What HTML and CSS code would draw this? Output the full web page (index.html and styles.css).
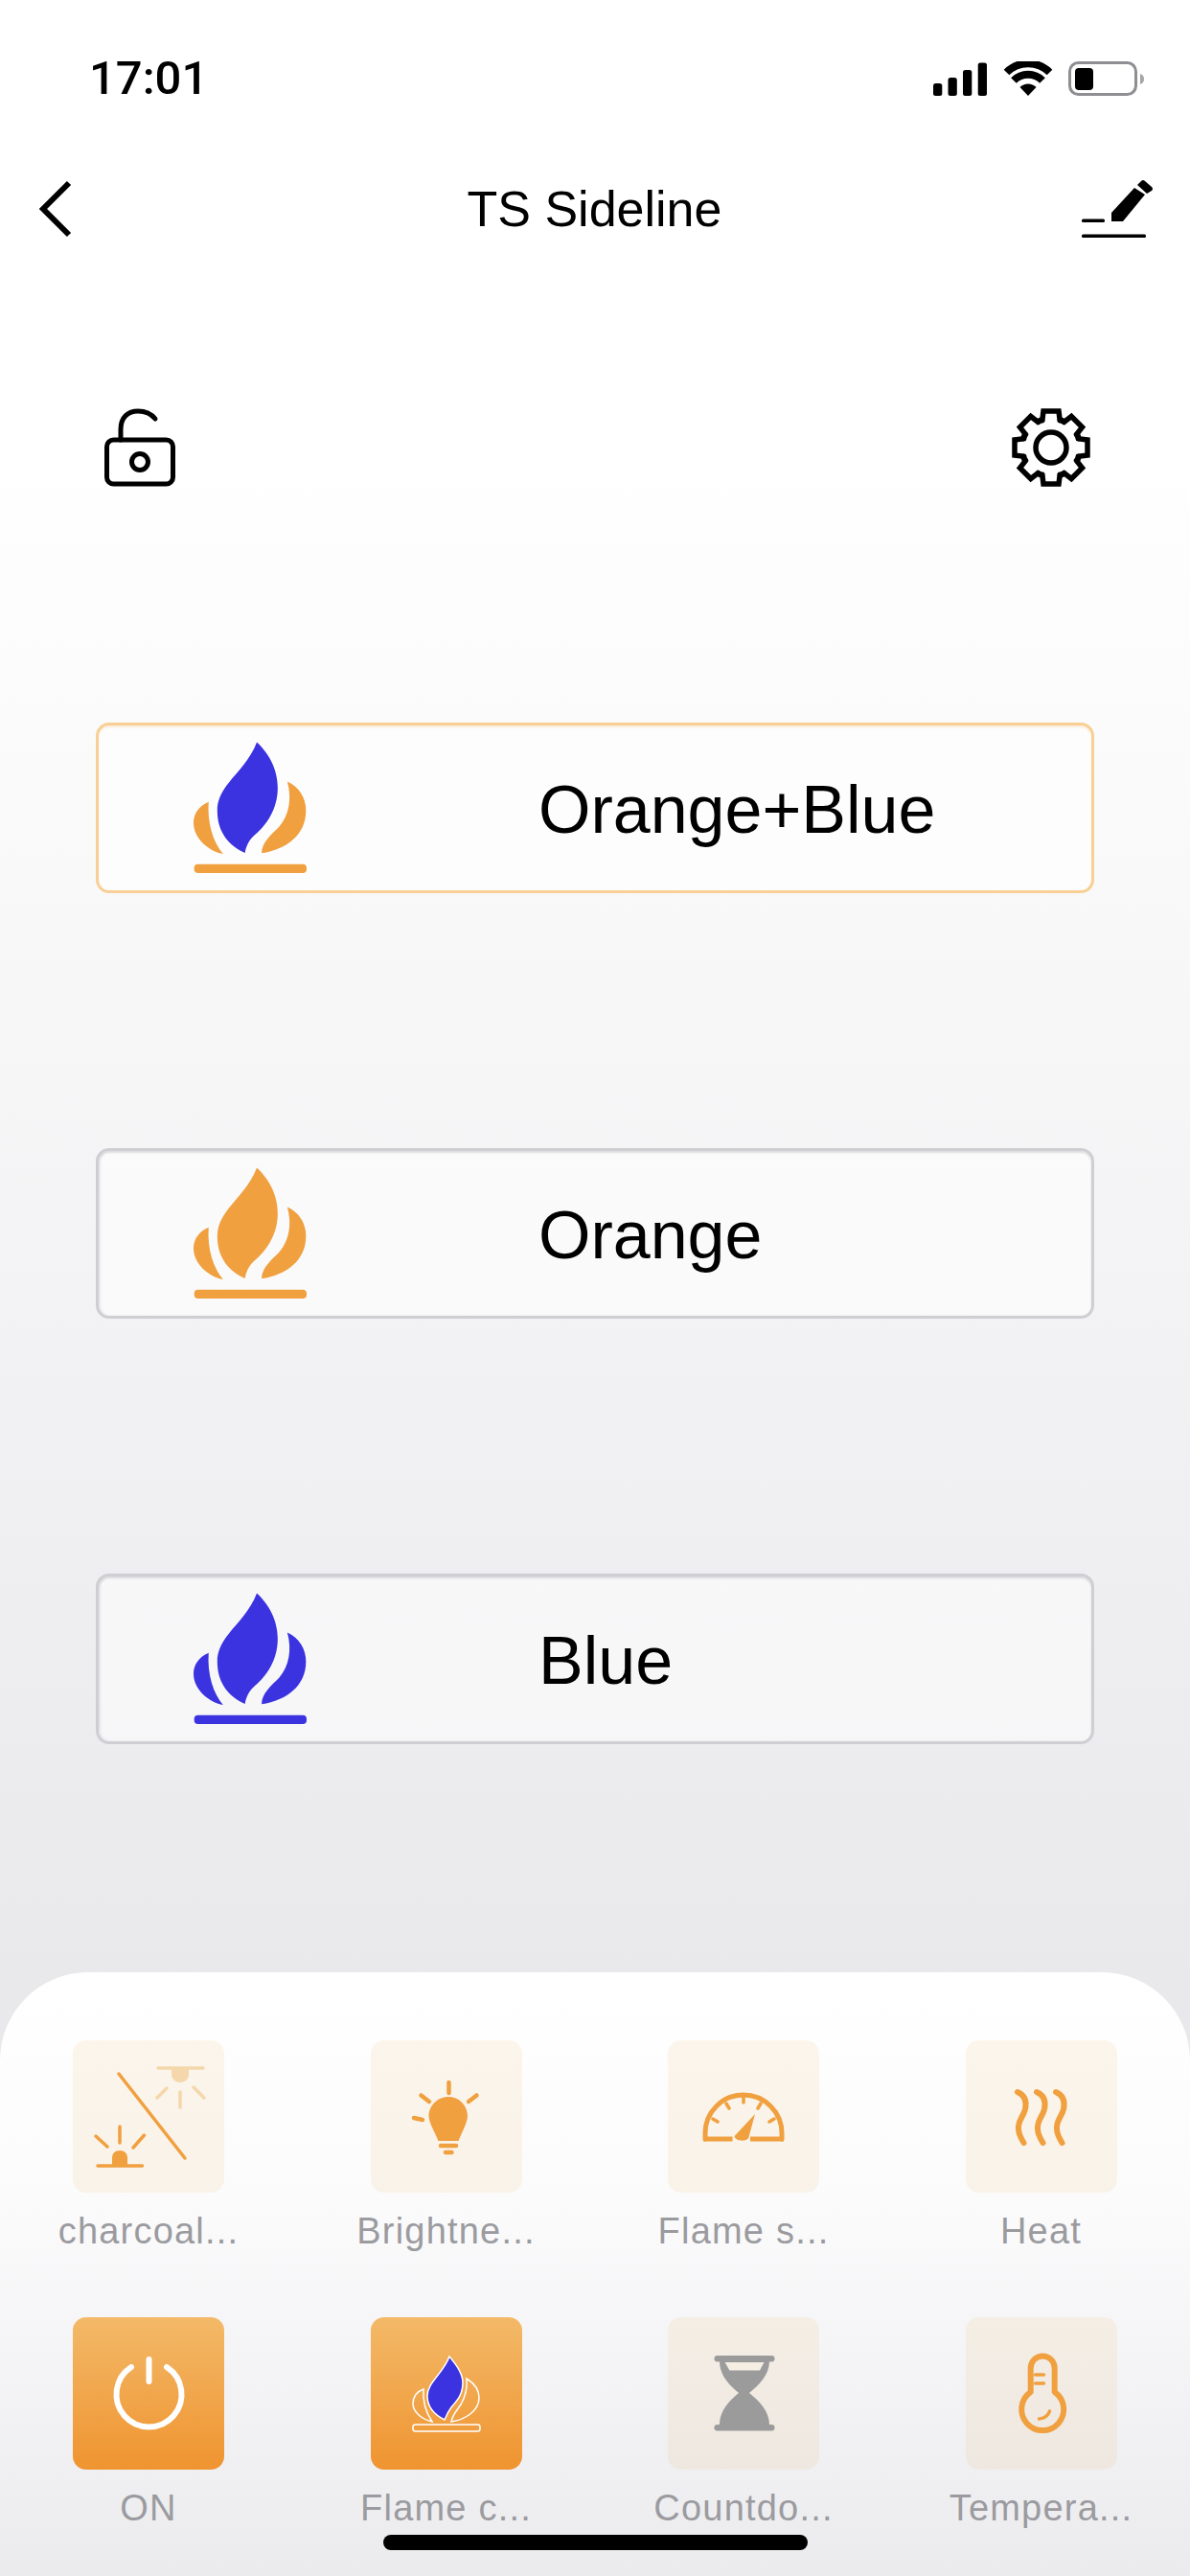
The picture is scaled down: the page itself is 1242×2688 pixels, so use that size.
FILE: index.html
```html
<!DOCTYPE html>
<html lang="en">
<head>
<meta charset="utf-8">
<title>TS Sideline</title>
<link rel="stylesheet" href="styles.css">
</head>
<body>
<svg class="defs" width="0" height="0" aria-hidden="true">
  <symbol id="flame" viewBox="368 108 352 408">
    <path class="flame-side" d="M415 293C385 305 368 330 368 358C368 410 420 448 460 455C430 420 410 360 415 293Z"/>
    <path class="flame-core" d="M565 108C600 140 630 190 630 250C630 320 590 370 560 395C545 408 533 425 528 452C480 430 442 390 442 320C442 240 530 200 565 108Z"/>
    <path class="flame-side" d="M660 230C695 245 718 280 718 320C718 395 660 440 580 453C580 420 610 395 635 370C665 335 675 285 660 230Z"/>
    <rect class="flame-side" x="370" y="487" width="350" height="28" rx="12"/>
  </symbol>
  <path id="gear-tooth" d="M-13.500 -26.500L-9 -30L-8 -38H8L9 -30L13.500 -26.500"/>
</svg>
<main class="screen">
  <header class="status">
    <span class="clock">17:01</span>
    <div class="status-icons">
      <svg class="signal" viewBox="0 0 56 35"><rect x="0" y="22" width="9.300" height="13" rx="2.500"/><rect x="15.500" y="16" width="9.300" height="19" rx="2.500"/><rect x="31" y="8" width="9.300" height="27" rx="2.500"/><rect x="46.700" y="0.500" width="9.300" height="34.500" rx="2.500"/></svg>
      <svg class="wifi" viewBox="0 0 52 37"><path d="M26 36L17.500 27A12 12 0 0 1 34.500 27Z"/><path class="wifi-arc" d="M11 20A21 21 0 0 1 41 20"/><path class="wifi-arc" d="M3.500 11.500A32 32 0 0 1 48.500 11.500"/></svg>
      <svg class="battery" viewBox="0 0 79 37"><rect class="battery-shell" x="1.500" y="1.500" width="69" height="33" rx="9"/><rect x="7" y="7" width="19" height="23" rx="4"/><path class="battery-nub" d="M75 13C78 14 79 16 79 18.500C79 21 78 23 75 24Z"/></svg>
    </div>
  </header>

  <nav class="navbar">
    <svg class="back" viewBox="0 0 36 60"><path d="M32 3L5 30L32 57"/></svg>
    <h1 class="title">TS Sideline</h1>
    <svg class="edit" viewBox="0 0 76 62"><rect x="0" y="41.500" width="24" height="3.500" rx="1.500"/><rect x="0" y="57.500" width="67" height="3.500" rx="1.500"/><path d="M31 35V44H43L66 16L55 9Z"/><path d="M58 6L62 2Q64 0 66 2L73 8Q75 10 73 12L68 15Z"/></svg>
  </nav>

  <div class="tools">
    <svg class="lock" viewBox="0 0 74 82"><rect class="stroke" x="2.500" y="33" width="69" height="46" rx="7"/><path class="stroke" d="M17 33V22C17 9 25 3 35 3C43 3 49 6 53 11"/><circle class="stroke" cx="37" cy="56" r="8.500"/></svg>
    <svg class="gear" viewBox="-42 -42 84 84">
      <g class="stroke gear-lines">
        <use href="#gear-tooth"/><use href="#gear-tooth" transform="rotate(45)"/><use href="#gear-tooth" transform="rotate(90)"/><use href="#gear-tooth" transform="rotate(135)"/><use href="#gear-tooth" transform="rotate(180)"/><use href="#gear-tooth" transform="rotate(225)"/><use href="#gear-tooth" transform="rotate(270)"/><use href="#gear-tooth" transform="rotate(315)"/>
        <circle r="16"/>
      </g>
    </svg>
  </div>

  <section class="modes">
    <button class="mode mode-active"><svg class="mode-icon flame-mix"><use href="#flame"/></svg><span class="mode-name">Orange+Blue</span></button>
    <button class="mode"><svg class="mode-icon flame-orange"><use href="#flame"/></svg><span class="mode-name">Orange</span></button>
    <button class="mode"><svg class="mode-icon flame-blue"><use href="#flame"/></svg><span class="mode-name">Blue</span></button>
  </section>

  <section class="panel">
    <div class="cell">
      <div class="tile"><svg class="tile-art" viewBox="0 0 158 159">
        <path class="ln" d="M48 35L117 123"/>
        <g class="pale"><path class="ln" d="M89 29H136M112 54V70M98 50L88 60M126 49L137 60"/><path class="fill" d="M103 29H121V36C121 41 116 44 112 44C108 44 103 41 103 36Z"/></g>
        <path class="ln" d="M26 131H72.500M49 90V107M24 100L36 111M74.500 99L63 112"/><path class="fill" d="M41 131V123C41 118 44 115 49 115C54 115 57 118 57 123V131Z"/>
      </svg></div>
      <span class="label">charcoal...</span>
    </div>
    <div class="cell">
      <div class="tile"><svg class="tile-art" viewBox="0 0 158 159">
        <path class="fill" d="M81 59C93 59 101 69 101 79C101 86 94 98 91.500 105H70.500C68 98 60.500 86 60.500 79C60.500 69 69 59 81 59Z"/>
        <path class="ln thick" d="M81.500 44V55M52.500 57.500L61 64M110.500 57.500L102 64M45 81L54 83M73 110H89M78 117H84.500"/>
      </svg></div>
      <span class="label">Brightne...</span>
    </div>
    <div class="cell">
      <div class="tile"><svg class="tile-art" viewBox="0 0 158 159">
        <path class="ln bold" d="M39 103V97A40 40 0 0 1 119 97V103"/>
        <path class="ln bold butt" d="M37 103H67.500M86 103H121"/>
        <path class="ln" d="M79 59V65M61 66L64 71M97 66L94 71M47 82L52 85M111 82L106 85"/>
        <path class="fill" d="M91 77L84.500 101C84 106 70 106 69.500 100Z"/>
      </svg></div>
      <span class="label">Flame s...</span>
    </div>
    <div class="cell">
      <div class="tile"><svg class="tile-art" viewBox="0 0 158 159">
        <path class="ln heat" d="M54 54C61 57 64 63 62 72C60 80 54 84 55 93C55.500 99 58 103 60.500 107M74 54C81 57 84 63 82 72C80 80 74 84 75 93C75.500 99 78 103 80.500 107M94 54C101 57 104 63 102 72C100 80 94 84 95 93C95.500 99 98 103 100.500 107"/>
      </svg></div>
      <span class="label">Heat</span>
    </div>
    <div class="cell">
      <div class="tile tile-on"><svg class="tile-art" viewBox="0 0 158 159">
        <path class="ln power" d="M61 52A34 34 0 1 0 98 52M79.500 44V67"/>
      </svg></div>
      <span class="label">ON</span>
    </div>
    <div class="cell">
      <div class="tile tile-on"><svg class="tile-art" viewBox="0 0 158 159">
        <g transform="translate(43 40)">
          <path class="outline" d="M12 35C4 38 1 43 1 50C1 60 12 67 21 69C15 60 11 48 12 35Z"/>
          <path class="outline" d="M57 24C65 29 70 36 70 44C70 58 55 67 41 69C42 62 47 57 51 51C56 42 58 33 57 24Z"/>
          <path class="core" d="M39 1C46 9 53 18 53 28C53 42 46 48 41 54C38 58 36 62 34 67C24 62 16 54 16 42C16 28 33 18 39 1Z"/>
          <rect class="outline" x="1" y="72" width="70" height="7" rx="2.500"/>
        </g>
      </svg></div>
      <span class="label">Flame c...</span>
    </div>
    <div class="cell">
      <div class="tile"><svg class="tile-art" viewBox="0 0 158 159">
        <rect class="grey" x="48.500" y="40" width="63" height="6.500" rx="3.200"/>
        <rect class="grey" x="48.500" y="112" width="63" height="6.500" rx="3.200"/>
        <path class="grey" d="M54 46C54 60 64 71 74 79C64 87 54 98 54 112H106C106 98 95 87 85 79C95 71 106 60 106 46Z"/>
        <path class="hole" d="M59.600 47H100.500L96 55.500H64.400Z"/>
      </svg></div>
      <span class="label">Countdo...</span>
    </div>
    <div class="cell">
      <div class="tile"><svg class="tile-art" viewBox="0 0 158 159">
        <path class="ln thermo" d="M67.700 78V53A12.500 12.500 0 0 1 92.700 53V78A22 22 0 1 1 67.700 78Z"/>
        <path class="ln" d="M72.500 60H81.500M72.500 69H81.500M76.500 106C82 105.500 86 102.500 87.500 98"/>
      </svg></div>
      <span class="label">Tempera...</span>
    </div>
  </section>
  <div class="home-bar"></div>
</main>
</body>
</html>
```
FILE: styles.css
```css
* { box-sizing: border-box; }
html, body { margin: 0; padding: 0; }
body { width: 1242px; height: 2688px; overflow: hidden; background: #fff; font-family: "Liberation Sans", Arial, sans-serif; color: #000; }
.defs { position: absolute; }

.screen {
  position: relative;
  display: flex;
  flex-direction: column;
  width: 1242px;
  height: 2688px;
  background: linear-gradient(180deg, #ffffff 0, #ffffff 460px, #e9e9ec 2060px);
}

.status { display: flex; justify-content: space-between; align-items: center; height: 38px; margin-top: 63px; padding: 0 48px 0 93px; }
.clock { font-family: Roboto, "Liberation Sans", sans-serif; font-size: 49px; font-weight: 500; line-height: 38px; }
.status-icons { display: flex; align-items: center; }
.signal { width: 56px; height: 35px; margin-right: 17px; fill: #000; }
.wifi { width: 52px; height: 37px; margin-right: 16px; fill: #000; }
.wifi-arc { fill: none; stroke: #000; stroke-width: 8; }
.battery { width: 79px; height: 37px; fill: #000; }
.battery-shell { fill: none; stroke: #8e8e93; stroke-width: 3; }
.battery-nub { fill: #a5a5a9; }

.navbar { display: flex; align-items: center; justify-content: space-between; height: 62px; margin-top: 86px; padding: 0 37px 0 40px; }
.back { width: 36px; height: 60px; fill: none; stroke: #000; stroke-width: 6; }
.title { margin: 0; flex: 1; padding-left: 36px; text-align: center; font-size: 52px; font-weight: 400; line-height: 62px; }
.edit { width: 76px; height: 62px; fill: #000; }

.tools { display: flex; justify-content: space-between; align-items: center; height: 84px; margin-top: 176px; padding: 0 103px 0 109px; }
.stroke { fill: none; stroke: #000; stroke-width: 5; stroke-linecap: round; }
.gear-lines { stroke-width: 5.5; }
.lock { width: 74px; height: 82px; }
.gear { width: 84px; height: 84px; }

.modes { display: flex; flex-direction: column; gap: 266px; margin-top: 245px; padding: 0 100px; }
.mode {
  display: flex;
  align-items: center;
  width: 1042px;
  height: 178px;
  padding: 0 0 0 99px;
  border: 3px solid #cfcfd3;
  border-radius: 14px;
  background: rgba(255, 255, 255, 0.55);
  box-shadow: inset 0 2px 2px rgba(190, 190, 195, 0.45), inset 2px 0 2px rgba(190, 190, 195, 0.25);
  font: inherit;
  color: inherit;
  text-align: left;
}
.mode-active { border-color: #f8cf94; background: #fdfdfe; box-shadow: inset 0 2px 2px rgba(248, 207, 148, 0.35); }
.mode-icon { width: 118px; height: 138px; flex: none; margin-right: 242px; }
.mode-name { padding-top: 4px; font-size: 70px; line-height: 1; }

.flame-mix { --side: #f0a03f; --core: #3b32e0; }
.flame-orange { --side: #f0a03f; --core: #f0a03f; }
.flame-blue { --side: #3b32e0; --core: #3b32e0; }
.flame-side { fill: var(--side); }
.flame-core { fill: var(--core); }

.panel {
  display: grid;
  grid-template-columns: repeat(4, 158px);
  grid-auto-rows: 159px;
  column-gap: 152.5px;
  row-gap: 130px;
  margin-top: auto;
  height: 630px;
  padding: 71px 0 0 76px;
  border-radius: 92px 92px 0 0;
  background: linear-gradient(180deg, #ffffff 0, #fbfbfc 240px, #ebebee 630px);
}
.cell { display: flex; flex-direction: column; align-items: center; width: 158px; }
.tile { width: 158px; height: 159px; flex: none; border-radius: 14px; background: rgba(232, 170, 70, 0.1); }
.tile-on { background: linear-gradient(180deg, #f3b968, #ef9430); }
.tile-art { display: block; width: 158px; height: 159px; }
.label { margin-top: 18px; font-size: 38px; line-height: 44px; letter-spacing: 1.2px; color: #9b9b9f; white-space: nowrap; }

.ln { fill: none; stroke: #f0a03f; stroke-width: 3.5; stroke-linecap: round; stroke-linejoin: round; }
.fill { fill: #f0a03f; }
.pale .ln { stroke: #f4d7ab; }
.pale .fill { fill: #f4d7ab; }
.thick { stroke-width: 4.5; }
.bold { stroke-width: 5; }
.butt { stroke-linecap: butt; }
.heat { stroke-width: 6; }
.power { stroke: #fff; stroke-width: 6; }
.outline { fill: none; stroke: #fff; stroke-width: 1.5; }
.core { fill: #3b32e0; stroke: #fff; stroke-width: 1.5; }
.grey { fill: #9b9b9b; }
.hole { fill: #f4eee3; }
.thermo { stroke-width: 6; }

.home-bar { position: absolute; left: 400px; top: 2645px; width: 443px; height: 16px; border-radius: 8px; background: #000; }
```
